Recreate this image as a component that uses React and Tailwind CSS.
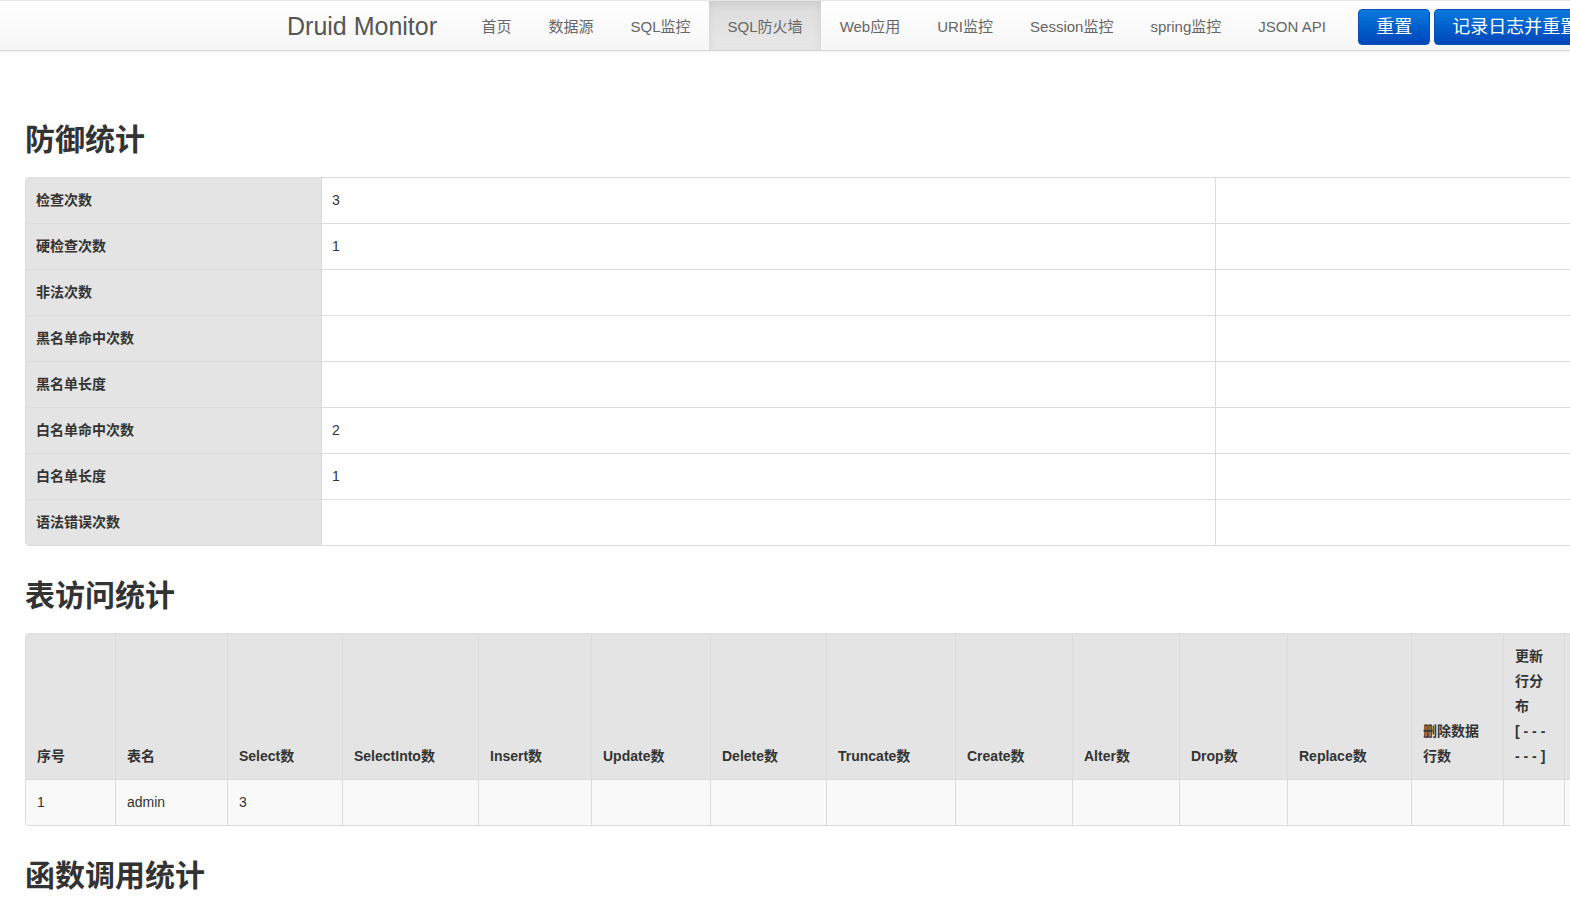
const NAV_ITEMS = ["首页", "数据源", "SQL监控", "SQL防火墙", "Web应用", "URI监控", "Session监控", "spring监控", "JSON API"];

const DEFENSE_ROWS = [
  ["检查次数", "3"],
  ["硬检查次数", "1"],
  ["非法次数", ""],
  ["黑名单命中次数", ""],
  ["黑名单长度", ""],
  ["白名单命中次数", "2"],
  ["白名单长度", "1"],
  ["语法错误次数", ""],
];

const TABLE_COLS = [
  { label: "序号", value: "1" },
  { label: "表名", value: "admin" },
  { label: "Select数", value: "3" },
  { label: "SelectInto数", value: "" },
  { label: "Insert数", value: "" },
  { label: "Update数", value: "" },
  { label: "Delete数", value: "" },
  { label: "Truncate数", value: "" },
  { label: "Create数", value: "" },
  { label: "Alter数", value: "" },
  { label: "Drop数", value: "" },
  { label: "Replace数", value: "" },
  {
    label: (
      <>
        删除数据
        <br />
        行数
      </>
    ),
    value: "",
  },
  {
    label: (
      <>
        更新
        <br />
        行分
        <br />
        布
        <br />[ - - -
        <br />- - - ]
      </>
    ),
    value: "",
  },
  { label: "读取行数", value: "" },
  { label: "读取行分布", value: "" },
];

function Heading({ children, className = "" }) {
  return (
    <h2 className={`text-[30px] leading-[33px] font-bold text-[#333] ${className}`}>{children}</h2>
  );
}

function Navbar() {
  return (
    <div className="h-[51px] w-[1800px] border-t border-b border-t-[#e6e6e6] border-b-[#d4d4d4] bg-gradient-to-b from-white to-[#f6f6f6] shadow-[0_1px_3px_rgba(0,0,0,0.06)]">
      <div className="flex h-full items-center pl-[272px]">
        <span className="px-[15px] pt-[2px] text-[25px] text-[#555]">Druid Monitor</span>
        <ul className="ml-[11px] flex h-full">
          {NAV_ITEMS.map((item) => (
            <li
              key={item}
              className={`flex h-full items-center px-[18.5px] pt-[3px] text-[15px] text-[#666] ${
                item === "SQL防火墙"
                  ? "bg-gradient-to-b from-[#dcdcdc] to-[#e8e8e8] text-[#555] shadow-[inset_0_3px_9px_rgba(0,0,0,0.08)]"
                  : ""
              }`}
            >
              {item}
            </li>
          ))}
        </ul>
        <div className="ml-[14px] flex gap-[4px] pt-[3px]">
          <button className="h-[36px] rounded-[4px] border border-[#0a4fb3] bg-gradient-to-b from-[#0c79dc] to-[#0046ba] px-[17px] text-[18px] text-white">
            重置
          </button>
          <button className="h-[36px] rounded-[4px] border border-[#0a4fb3] bg-gradient-to-b from-[#0c79dc] to-[#0046ba] px-[17px] text-[18px] text-white">
            记录日志并重置
          </button>
        </div>
      </div>
    </div>
  );
}

function DefenseTable() {
  return (
    <div className="w-[1700px] overflow-hidden rounded-[4px] border border-[#dcdcdc]">
      <div className="grid grid-cols-[295px_894px_1fr]">
        {DEFENSE_ROWS.map(([label, value], i) => (
          <div key={label} className="contents">
            <div
              className={`bg-[#e4e4e4] px-[10px] py-[10px] text-[14px] leading-[25px] font-bold text-[#333] ${
                i ? "border-t border-[#dcdcdc]" : ""
              }`}
            >
              {label}
            </div>
            <div
              className={`border-l border-[#dcdcdc] px-[10px] py-[10px] text-[14px] leading-[25px] text-[#333] ${
                i ? "border-t" : ""
              }`}
            >
              {value}
            </div>
            <div className={`border-l border-[#dcdcdc] py-[10px] ${i ? "border-t" : ""}`} />
          </div>
        ))}
      </div>
    </div>
  );
}

function TableAccess() {
  const cols =
    "grid-cols-[89px_112px_115px_136px_113px_119px_116px_129px_117px_107px_108px_124px_92px_61px_120px_120px]";
  return (
    <div className="w-[1800px] overflow-hidden rounded-[4px] border border-[#dcdcdc]">
      <div className={`grid ${cols}`}>
        {TABLE_COLS.map((col, i) => (
          <div
            key={i}
            className={`flex items-end bg-[#e4e4e4] px-[11px] py-[10px] text-[14px] leading-[25px] font-bold text-[#333] ${
              i ? "border-l border-[#dcdcdc]" : ""
            }`}
          >
            <span>{col.label}</span>
          </div>
        ))}
        {TABLE_COLS.map((col, i) => (
          <div
            key={"v" + i}
            className={`h-[46px] border-t border-[#dcdcdc] bg-[#f9f9f9] px-[11px] py-[10px] text-[14px] leading-[25px] text-[#333] ${
              i ? "border-l" : ""
            }`}
          >
            {col.value}
          </div>
        ))}
      </div>
    </div>
  );
}

export default function App() {
  return (
    <div className="min-h-screen w-[1570px] overflow-hidden bg-white font-['Liberation_Sans','Noto_Sans_CJK_SC',sans-serif]">
      <Navbar />
      <div className="pl-[25px] pb-[40px]">
        <Heading className="mt-[72px] mb-[21px]">防御统计</Heading>
        <DefenseTable />
        <Heading className="mt-[33px] mb-[21px]">表访问统计</Heading>
        <TableAccess />
        <Heading className="mt-[33px] mb-[21px]">函数调用统计</Heading>
      </div>
    </div>
  );
}
